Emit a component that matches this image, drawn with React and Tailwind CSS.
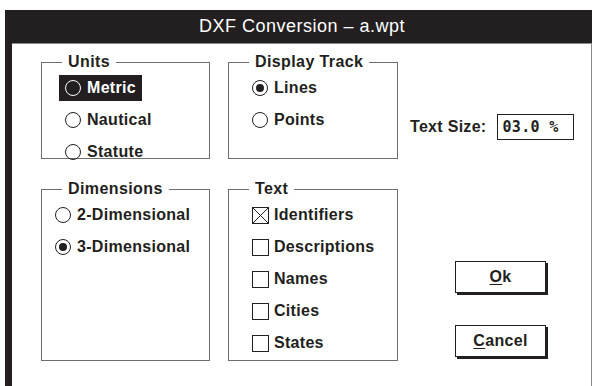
import React from "react";

function Radio({ on, inverted }) {
  return (
    <span
      className={`relative inline-flex h-[16px] w-[16px] shrink-0 items-center justify-center rounded-full border ${
        inverted ? "border-white" : "border-[#231f20]"
      }`}
    >
      {on && <span className="h-[8px] w-[8px] rounded-full bg-[#231f20]" />}
    </span>
  );
}

function Check({ on }) {
  return (
    <span className="inline-flex h-[17px] w-[17px] shrink-0 border border-[#231f20] bg-white">
      {on && (
        <svg width="15" height="15" viewBox="0 0 15 15">
          <path d="M0 0L15 15M15 0L0 15" stroke="#231f20" strokeWidth="1" />
        </svg>
      )}
    </span>
  );
}

function Group({ title, children }) {
  return (
    <fieldset className="flex flex-col border border-[#6e6e6e]">
      <legend className="ml-[20px] px-[6px] text-[16px] font-bold leading-[18px] tracking-[0.4px]">
        {title}
      </legend>
      {children}
    </fieldset>
  );
}

function RadioRow({ label, on, highlight }) {
  return (
    <div
      className={`flex h-[26px] items-center gap-[6px] px-[6px] ${
        highlight ? "self-start bg-[#231f20] text-white" : ""
      }`}
    >
      <Radio on={on} inverted={highlight} />
      <span>{label}</span>
    </div>
  );
}

function CheckRow({ label, on }) {
  return (
    <div className="flex h-[26px] items-center gap-[5px]">
      <Check on={on} />
      <span>{label}</span>
    </div>
  );
}

function Button({ children }) {
  return (
    <button className="flex h-[32px] w-[91px] items-center justify-center border border-[#231f20] bg-white text-[16px] font-bold tracking-[0.3px] shadow-[2px_2px_0_#231f20]">
      {children}
    </button>
  );
}

export default function App() {
  return (
    <div
      className="h-[386px] w-[592px] overflow-hidden bg-white pl-[5px] pt-[10px] text-[#231f20]"
      style={{ fontFamily: '"Liberation Sans", Arial, sans-serif' }}
    >
      <div className="flex h-full flex-col border-l-[7px] border-[#231f20]">
        <div className="flex h-[33px] items-center justify-center bg-[#231f20] text-[18px] tracking-[0.5px] text-white">
          DXF Conversion – a.wpt
        </div>
        <div className="flex-1 border-r border-t border-[#8a8a8a] pl-[29px] pt-[9px]">
          <div className="grid grid-cols-[169px_170px_1fr] grid-rows-[106px_181px] gap-x-[18px] gap-y-[21px] text-[16px] font-bold tracking-[0.3px]">
            <Group title="Units">
              <div className="mt-[4px] flex flex-col gap-[6px] pl-[17px]">
                <RadioRow label="Metric" highlight />
                <RadioRow label="Nautical" />
                <RadioRow label="Statute" />
              </div>
            </Group>

            <Group title="Display Track">
              <div className="mt-[4px] flex flex-col gap-[6px] pl-[17px]">
                <RadioRow label="Lines" on />
                <RadioRow label="Points" />
              </div>
            </Group>

            <div className="-ml-[6px] flex items-start whitespace-nowrap pt-[61px]">
              <span className="leading-[26px]">Text Size:</span>
              <span
                className="ml-[10px] flex h-[26px] w-[77px] items-center border border-[#231f20] pl-[5px] text-[15px] font-bold"
                style={{ fontFamily: '"DejaVu Sans Mono", monospace' }}
              >
                03.0 %
              </span>
            </div>

            <Group title="Dimensions">
              <div className="mt-[4px] flex flex-col gap-[6px] pl-[7px]">
                <RadioRow label="2-Dimensional" />
                <RadioRow label="3-Dimensional" on />
              </div>
            </Group>

            <Group title="Text">
              <div className="mt-[4px] flex flex-col gap-[6px] pl-[23px]">
                <CheckRow label="Identifiers" on />
                <CheckRow label="Descriptions" />
                <CheckRow label="Names" />
                <CheckRow label="Cities" />
                <CheckRow label="States" />
              </div>
            </Group>

            <div className="flex flex-col items-start gap-[32px] pl-[39px] pt-[81px]">
              <Button>
                <span className="underline underline-offset-2">O</span>k
              </Button>
              <Button>
                <span className="underline underline-offset-2">C</span>ancel
              </Button>
            </div>
          </div>
        </div>
      </div>
    </div>
  );
}
